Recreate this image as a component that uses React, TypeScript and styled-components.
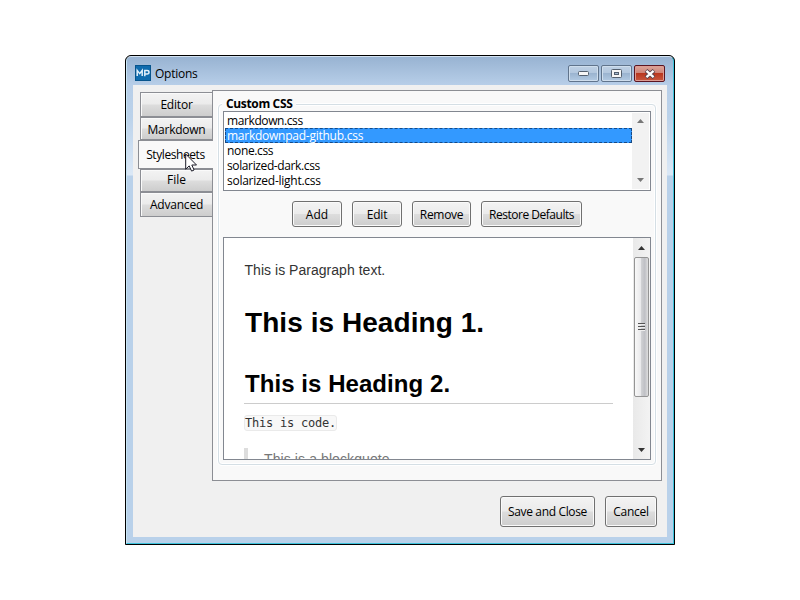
import React from 'react';
import styled, { createGlobalStyle } from 'styled-components';

const Global = createGlobalStyle`
  *, *::before, *::after { box-sizing: border-box; }
  html, body { margin: 0; background: #fff; }
  body { width: 800px; height: 600px; overflow: hidden; }
`;

const Desktop = styled.main`
  width: 800px;
  height: 600px;
  padding: 55px 125px;
  font: 12px/15px 'Open Sans', 'Noto Sans', sans-serif;
  color: #000;
  cursor: default;
`;

const WindowFrame = styled.section`
  width: 550px;
  height: 490px;
  border: 1px solid #000;
  border-radius: 6px 6px 0 0;
  background: #000;
`;

const Glass = styled.div`
  height: 488px;
  display: flex;
  flex-direction: column;
  padding: 0 6px 6px;
  border-style: solid;
  border-width: 1px;
  border-color: #d3e2f1 #3cc3dc #3cc3dc #c9e6f5;
  border-radius: 5px 5px 0 0;
  background: linear-gradient(#98b3d2 0, #b7cee8 28px, #bbd2ea 60px, #dbe8f6 118px, #b9d1ea 119px);
`;

const TitleBar = styled.header`
  height: 28px;
  display: flex;
  align-items: flex-start;
  padding: 8px 2px 0 2px;
`;

const Logo = styled.svg`
  display: block;
  flex: none;
`;

const Title = styled.h1`
  flex: 1;
  margin: 1px 0 0 4px;
  font-size: 12px;
  line-height: 15px;
  font-weight: 400;
`;

const Fit = styled.span<{ $gap: number }>`
  letter-spacing: ${(p) => p.$gap}px;
  white-space: nowrap;
`;

const Captions = styled.div`
  display: flex;
  gap: 2px;
`;

const CaptionButton = styled.button<{ $danger?: boolean }>`
  width: 31px;
  height: 17px;
  padding: 0;
  display: grid;
  place-items: center;
  border: 1px solid ${(p) => (p.$danger ? '#5b1521' : '#60748c')};
  border-radius: 2px;
  box-shadow: inset 0 0 0 1px ${(p) => (p.$danger ? '#dd9c93' : '#cfdeed')};
  background: ${(p) =>
    p.$danger
      ? 'linear-gradient(#dba59b 0, #cf8275 48%, #b9371f 50%, #c9583f 100%)'
      : 'linear-gradient(#bfd1e5 0, #b2c7de 48%, #9bb4d0 50%, #b2cae3 100%)'};
`;

const Client = styled.div`
  height: 452px;
  padding: 5px 5px 0 5px;
  background: #f0f0f0;
`;

const Tabbed = styled.div`
  display: flex;
  height: 391px;
`;

const TabList = styled.nav`
  width: 75px;
  margin-right: -1px;
  padding-top: 2px;
  display: flex;
  flex-direction: column;
  align-items: flex-end;
  z-index: 1;
`;

const Tab = styled.button<{ $active?: boolean; $height: number; $top?: number; $bottom?: number }>`
  width: ${(p) => (p.$active ? 75 : 73)}px;
  height: ${(p) => p.$height}px;
  margin: 0;
  padding: ${(p) => p.$top ?? 0}px ${(p) => (p.$active ? 1 : 0)}px ${(p) => p.$bottom ?? 0}px 0;
  border: 1px solid #8c8e94;
  border-right-width: ${(p) => (p.$active ? 0 : 1)}px;
  background: ${(p) =>
    p.$active ? '#f9f9f9' : 'linear-gradient(#f3f3f3 0, #ebebeb 49%, #dddddd 51%, #cdcdcd 100%)'};
  box-shadow: ${(p) => (p.$active ? 'none' : 'inset 1px 1px 0 #fafafa')};
  font: inherit;
  line-height: 15px;
  color: #000;
`;

const Panel = styled.div`
  width: 450px;
  height: 391px;
  padding: 13px 5px 0 5px;
  border: 1px solid #8c8e94;
  background: #f9f9f9;
`;

const Group = styled.section`
  width: 438px;
  height: 361px;
  padding: 0 4px;
  border: 1px solid #d5dfe5;
  border-radius: 4px;
  box-shadow: 0 0 0 1px #fff, inset 0 0 0 1px #fff;
`;

const GroupTitle = styled.h2`
  width: 74px;
  height: 15px;
  margin: -9px 0 0 -1px;
  padding-left: 4px;
  background: #f9f9f9;
  font-size: 12px;
  line-height: 15px;
  font-weight: 700;
  white-space: nowrap;
`;

const ListBox = styled.div`
  width: 428px;
  height: 80px;
  padding: 1px;
  display: flex;
  border: 1px solid #828790;
  background: #fff;
`;

const List = styled.ul`
  flex: 1;
  margin: 0;
  padding: 0;
  list-style: none;
`;

const Item = styled.li<{ $selected?: boolean }>`
  height: 15px;
  padding-left: 1px;
  line-height: 13px;
  border: 1px ${(p) => (p.$selected ? 'dashed #164a85' : 'solid transparent')};
  background: ${(p) => (p.$selected ? '#3399ff' : 'transparent')};
  color: ${(p) => (p.$selected ? '#fff' : '#000')};
`;

const IdleTrack = styled.div`
  width: 17px;
  height: 76px;
  display: flex;
  flex-direction: column;
  justify-content: space-between;
  align-items: center;
  padding: 6px 1px 7px 0;
  background: #f2f2f2;
`;

const ButtonRow = styled.div`
  display: flex;
  gap: 10px;
  padding: 10px 0 10px 69px;
`;

const PushButton = styled.button<{ $width: number; $height?: number }>`
  width: ${(p) => p.$width}px;
  height: ${(p) => p.$height ?? 26}px;
  padding: ${(p) => (p.$height ? 0 : 1)}px 0 0;
  border: 1px solid #707070;
  border-radius: 3px;
  background: linear-gradient(#f3f3f3 0, #ebebeb 49%, #dddddd 51%, #cdcdcd 100%);
  box-shadow: inset 0 0 0 1px #fafafa;
  font: inherit;
  line-height: 15px;
  color: #000;
`;

const Preview = styled.div`
  width: 428px;
  height: 223px;
  display: flex;
  border: 1px solid #828790;
  background: #fff;
`;

const Document = styled.article`
  flex: 1;
  height: 221px;
  overflow: hidden;
  padding: 23px 20px 0 20px;
  font-family: 'Liberation Sans', Arial, sans-serif;
`;

const Paragraph = styled.p`
  margin: 0 0 0 0.5px;
  font-size: 14px;
  line-height: 18px;
  letter-spacing: 0.03px;
  color: #333;
`;

const Heading1 = styled.h1`
  margin: 27px 0 0 1px;
  font-size: 28px;
  line-height: 34px;
  letter-spacing: 0.06px;
`;

const Heading2 = styled.h2`
  margin: 26px 0 0;
  height: 38px;
  padding-left: 1px;
  border-bottom: 1px solid #ccc;
  font-size: 24px;
  line-height: 36px;
  letter-spacing: 0.06px;
`;

const Code = styled.code`
  display: block;
  width: 93px;
  height: 16px;
  margin-top: 11px;
  border: 1px solid #eaeaea;
  border-radius: 3px;
  background: #f8f8f8;
  font: 12px/14px 'DejaVu Sans Mono', monospace;
  letter-spacing: -0.22px;
  white-space: nowrap;
  color: #333;
`;

const Quote = styled.blockquote`
  margin: 17px 0 0;
  padding-left: 16px;
  border-left: 4px solid #ddd;
  font-size: 14px;
  line-height: 22px;
  letter-spacing: 0.1px;
  color: #777;
`;

const Scrollbar = styled.div`
  width: 17px;
  height: 221px;
  display: flex;
  flex-direction: column;
  align-items: center;
  padding: 8px 1px 7px 0;
  background: linear-gradient(90deg, #e9e9e9, #f3f3f3);

  > svg:last-child {
    margin-top: auto;
  }
`;

const Thumb = styled.div`
  width: 15px;
  height: 140px;
  margin-top: 7px;
  display: grid;
  place-items: center;
  border: 1px solid #949494;
  border-radius: 2px;
  background: linear-gradient(90deg, #f8f8f8 0, #e9e9eb 45%, #cfd0d3 50%, #bfc0c5 75%, #dedede 100%);
`;

const Footer = styled.footer`
  display: flex;
  justify-content: flex-end;
  gap: 10px;
  padding: 15px 5px 0 0;
`;

const Pointer = styled.svg`
  position: absolute;
  left: 185px;
  top: 153px;
  z-index: 3;
`;

const Arrow = ({ down = false, idle = false }: { down?: boolean; idle?: boolean }) => (
  <svg width="7" height="4" viewBox="0 0 7 4">
    <path d={down ? 'M0 0h7L3.5 4z' : 'M0 4h7L3.5 0z'} fill={idle ? '#777' : '#333'} />
  </svg>
);

const tabs = [
  { name: 'Editor', height: 25, gap: -0.2 },
  { name: 'Markdown', height: 23, gap: -0.25, top: 1 },
  { name: 'Stylesheets', height: 29, gap: -0.42, active: true },
  { name: 'File', height: 23, gap: 0, bottom: 2 },
  { name: 'Advanced', height: 25, gap: -0.2 },
];

const files = [
  { name: 'markdown.css', gap: -0.4 },
  { name: 'markdownpad-github.css', gap: -0.25, selected: true },
  { name: 'none.css', gap: -0.35 },
  { name: 'solarized-dark.css', gap: -0.38 },
  { name: 'solarized-light.css', gap: -0.26 },
];

const actions = [
  { name: 'Add', width: 50, gap: 0 },
  { name: 'Edit', width: 50, gap: -0.2 },
  { name: 'Remove', width: 59, gap: -0.3 },
  { name: 'Restore Defaults', width: 101, gap: -0.48 },
];

export default function App() {
  return (
    <>
      <Global />
      <Desktop>
        <WindowFrame>
          <Glass>
            <TitleBar>
              <Logo width="16" height="16" viewBox="0 0 16 16">
                <rect x=".5" y=".5" width="15" height="15" fill="#116cae" stroke="#07548c" />
                <path d="M2.2 11V5.4L4.7 8.6 7.2 5.4V11M9.8 11.3V5.6h2.4q1.8 0 1.8 1.7T12.2 9H9.8" fill="none" stroke="#e3f0fa" strokeWidth="1.5" />
              </Logo>
              <Title><Fit $gap={-0.25}>Options</Fit></Title>
              <Captions>
                <CaptionButton aria-label="Minimize">
                  <svg width="11" height="5" viewBox="0 0 11 5">
                    <rect x=".5" y=".5" width="10" height="4" rx="1" fill="#f7f7f7" stroke="#54606f" />
                  </svg>
                </CaptionButton>
                <CaptionButton aria-label="Maximize">
                  <svg width="11" height="9" viewBox="0 0 11 9">
                    <rect x=".5" y=".5" width="10" height="8" rx="1" fill="#f7f7f7" stroke="#54606f" />
                    <rect x="3.5" y="3.5" width="4" height="2" fill="#a6bbd2" stroke="#54606f" />
                  </svg>
                </CaptionButton>
                <CaptionButton $danger aria-label="Close">
                  <svg width="12" height="10" viewBox="0 0 12 10">
                    <path d="M2 1.5 10 8.5M10 1.5 2 8.5" stroke="#53404c" strokeWidth="4" />
                    <path d="M2.4 1.8 9.6 8.2M9.6 1.8 2.4 8.2" stroke="#fff" strokeWidth="2.3" />
                  </svg>
                </CaptionButton>
              </Captions>
            </TitleBar>
            <Client>
              <Tabbed>
                <TabList>
                  {tabs.map((t) => (
                    <Tab key={t.name} $active={t.active} $height={t.height} $top={t.top} $bottom={t.bottom}>
                      <Fit $gap={t.gap}>{t.name}</Fit>
                    </Tab>
                  ))}
                </TabList>
                <Panel>
                  <Group>
                    <GroupTitle><Fit $gap={-0.35}>Custom CSS</Fit></GroupTitle>
                    <ListBox>
                      <List>
                        {files.map((f) => (
                          <Item key={f.name} $selected={f.selected}><Fit $gap={f.gap}>{f.name}</Fit></Item>
                        ))}
                      </List>
                      <IdleTrack><Arrow idle /><Arrow idle down /></IdleTrack>
                    </ListBox>
                    <ButtonRow>
                      {actions.map((a) => (
                        <PushButton key={a.name} $width={a.width}><Fit $gap={a.gap}>{a.name}</Fit></PushButton>
                      ))}
                    </ButtonRow>
                    <Preview>
                      <Document>
                        <Paragraph>This is Paragraph text.</Paragraph>
                        <Heading1>This is Heading 1.</Heading1>
                        <Heading2>This is Heading 2.</Heading2>
                        <Code>This is code.</Code>
                        <Quote>This is a blockquote.</Quote>
                      </Document>
                      <Scrollbar>
                        <Arrow />
                        <Thumb>
                          <svg width="7" height="8" viewBox="0 0 7 8">
                            <path d="M0 .5h7M0 3.5h7M0 6.5h7" stroke="#555" />
                            <path d="M0 1.5h7M0 4.5h7M0 7.5h7" stroke="#eee" />
                          </svg>
                        </Thumb>
                        <Arrow down />
                      </Scrollbar>
                    </Preview>
                  </Group>
                </Panel>
              </Tabbed>
              <Footer>
                <PushButton $width={95} $height={31}><Fit $gap={-0.35}>Save and Close</Fit></PushButton>
                <PushButton $width={52} $height={31}><Fit $gap={-0.25}>Cancel</Fit></PushButton>
              </Footer>
            </Client>
          </Glass>
        </WindowFrame>
        <Pointer width="12" height="19" viewBox="0 0 12 19">
          <path d="M.7 1v15.2l3.5-3.3 2.4 5.2 2.5-1.1-2.3-5H11.5z" fill="#fff" stroke="#1c1c28" />
        </Pointer>
      </Desktop>
    </>
  );
}
